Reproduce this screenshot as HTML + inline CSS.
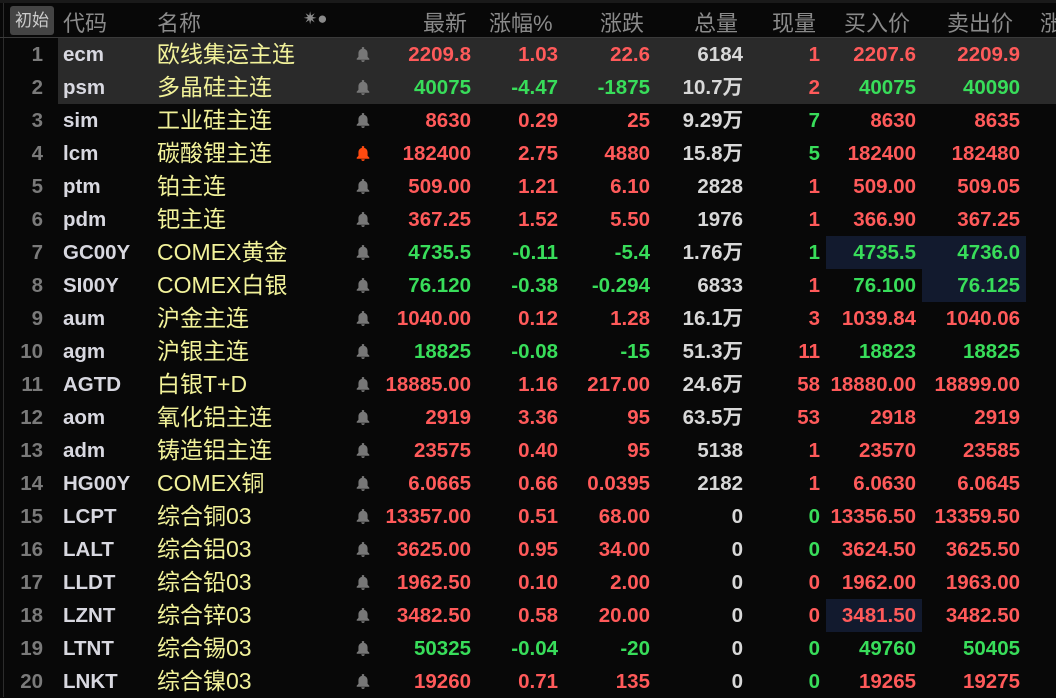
<!DOCTYPE html>
<html><head><meta charset="utf-8"><style>
body{margin:0;width:1056px;height:697px;background:#080808;overflow:hidden;position:relative;font-family:"Liberation Sans","Noto Sans CJK SC",sans-serif}
.top{position:absolute;left:0;top:0;width:1056px;height:3px;background:#1a1a1a}
.vl{position:absolute;left:3px;top:3px;width:1px;height:694px;background:#2c2c2c}
.hd{position:absolute;top:0;left:0;width:1056px;height:37px;border-bottom:1px solid #3a3a3a;color:#8a8a8a;font-size:22px}
.hd span{position:absolute;top:6px;white-space:nowrap}
.btn{position:absolute;left:10px;top:6px;width:44px;height:29px;background:#444;border-radius:3px;color:#ccc;font-size:17px;line-height:29px;text-align:center}
.r{position:absolute;left:0;width:1056px;height:33px;font-size:20.5px;font-weight:bold;line-height:33px}
.r.sel::before{content:"";position:absolute;left:58px;top:0;right:0;bottom:0;background:#2a2a2a}
.r span{position:absolute;top:0;white-space:nowrap}
.n{left:0;width:43px;text-align:right;color:#7a7a7a}
.c{left:63px;color:#d8d8e0}
.m{left:157px;color:#f2f29a;font-weight:normal;font-size:23px}
.b{position:absolute;left:355px;top:8px;width:16px;height:16px}
.v1{left:371px;width:100px;text-align:right}
.v2{left:478px;width:80px;text-align:right}
.v3{left:560px;width:90px;text-align:right}
.v4{left:653px;width:90px;text-align:right;color:#d8d8d8}
.v5{left:750px;width:70px;text-align:right}
.v6{left:822px;width:94px;text-align:right}
.v7{left:922px;width:98px;text-align:right}
.R{color:#ff5a5a}.G{color:#38dd5a}
.hl{position:absolute;background:#121a2e}
</style></head><body>
<div class="top"></div><div class="vl"></div>
<div class="hd">
<div class="btn">初始</div>
<span style="left:63px">代码</span><span style="left:157px">名称</span>
<span style="left:303px;font-size:17px;top:9px">✷●</span>
<span style="left:423px">最新</span><span style="left:489px">涨幅%</span><span style="left:600px">涨跌</span>
<span style="left:694px">总量</span><span style="left:772px">现量</span><span style="left:844px">买入价</span><span style="left:947px">卖出价</span><span style="left:1040px">涨</span>
</div>
<div class="hl" style="left:826px;top:236px;width:200px;height:33px"></div>
<div class="hl" style="left:922px;top:269px;width:104px;height:33px"></div>
<div class="hl" style="left:826px;top:599px;width:96px;height:33px"></div>
<svg width="0" height="0" style="position:absolute"><defs><symbol id="bell" viewBox="0 0 14 14"><path d="M6 1h2v1.5c2 .5 3 2 3 4v3l1.5 1.5v1H1.5v-1L3 9.5v-3c0-2 1-3.5 3-4z M5.5 12.5h3a1.5 1.5 0 0 1-3 0z"/></symbol></defs></svg>

<div class="r sel" style="top:38px"><span class="n">1</span><span class="c">ecm</span><span class="m">欧线集运主连</span><svg class="b" width="16" height="16" fill="#777"><use href="#bell"/></svg><span class="v1 R">2209.8</span><span class="v2 R">1.03</span><span class="v3 R">22.6</span><span class="v4">6184</span><span class="v5 R">1</span><span class="v6 R">2207.6</span><span class="v7 R">2209.9</span></div>
<div class="r sel" style="top:71px"><span class="n">2</span><span class="c">psm</span><span class="m">多晶硅主连</span><svg class="b" width="16" height="16" fill="#777"><use href="#bell"/></svg><span class="v1 G">40075</span><span class="v2 G">-4.47</span><span class="v3 G">-1875</span><span class="v4">10.7万</span><span class="v5 R">2</span><span class="v6 G">40075</span><span class="v7 G">40090</span></div>
<div class="r" style="top:104px"><span class="n">3</span><span class="c">sim</span><span class="m">工业硅主连</span><svg class="b" width="16" height="16" fill="#777"><use href="#bell"/></svg><span class="v1 R">8630</span><span class="v2 R">0.29</span><span class="v3 R">25</span><span class="v4">9.29万</span><span class="v5 G">7</span><span class="v6 R">8630</span><span class="v7 R">8635</span></div>
<div class="r" style="top:137px"><span class="n">4</span><span class="c">lcm</span><span class="m">碳酸锂主连</span><svg class="b" width="16" height="16" fill="#ff4a10"><use href="#bell"/></svg><span class="v1 R">182400</span><span class="v2 R">2.75</span><span class="v3 R">4880</span><span class="v4">15.8万</span><span class="v5 G">5</span><span class="v6 R">182400</span><span class="v7 R">182480</span></div>
<div class="r" style="top:170px"><span class="n">5</span><span class="c">ptm</span><span class="m">铂主连</span><svg class="b" width="16" height="16" fill="#777"><use href="#bell"/></svg><span class="v1 R">509.00</span><span class="v2 R">1.21</span><span class="v3 R">6.10</span><span class="v4">2828</span><span class="v5 R">1</span><span class="v6 R">509.00</span><span class="v7 R">509.05</span></div>
<div class="r" style="top:203px"><span class="n">6</span><span class="c">pdm</span><span class="m">钯主连</span><svg class="b" width="16" height="16" fill="#777"><use href="#bell"/></svg><span class="v1 R">367.25</span><span class="v2 R">1.52</span><span class="v3 R">5.50</span><span class="v4">1976</span><span class="v5 R">1</span><span class="v6 R">366.90</span><span class="v7 R">367.25</span></div>
<div class="r" style="top:236px"><span class="n">7</span><span class="c">GC00Y</span><span class="m">COMEX黄金</span><svg class="b" width="16" height="16" fill="#777"><use href="#bell"/></svg><span class="v1 G">4735.5</span><span class="v2 G">-0.11</span><span class="v3 G">-5.4</span><span class="v4">1.76万</span><span class="v5 G">1</span><span class="v6 G">4735.5</span><span class="v7 G">4736.0</span></div>
<div class="r" style="top:269px"><span class="n">8</span><span class="c">SI00Y</span><span class="m">COMEX白银</span><svg class="b" width="16" height="16" fill="#777"><use href="#bell"/></svg><span class="v1 G">76.120</span><span class="v2 G">-0.38</span><span class="v3 G">-0.294</span><span class="v4">6833</span><span class="v5 R">1</span><span class="v6 G">76.100</span><span class="v7 G">76.125</span></div>
<div class="r" style="top:302px"><span class="n">9</span><span class="c">aum</span><span class="m">沪金主连</span><svg class="b" width="16" height="16" fill="#777"><use href="#bell"/></svg><span class="v1 R">1040.00</span><span class="v2 R">0.12</span><span class="v3 R">1.28</span><span class="v4">16.1万</span><span class="v5 R">3</span><span class="v6 R">1039.84</span><span class="v7 R">1040.06</span></div>
<div class="r" style="top:335px"><span class="n">10</span><span class="c">agm</span><span class="m">沪银主连</span><svg class="b" width="16" height="16" fill="#777"><use href="#bell"/></svg><span class="v1 G">18825</span><span class="v2 G">-0.08</span><span class="v3 G">-15</span><span class="v4">51.3万</span><span class="v5 R">11</span><span class="v6 G">18823</span><span class="v7 G">18825</span></div>
<div class="r" style="top:368px"><span class="n">11</span><span class="c">AGTD</span><span class="m">白银T+D</span><svg class="b" width="16" height="16" fill="#777"><use href="#bell"/></svg><span class="v1 R">18885.00</span><span class="v2 R">1.16</span><span class="v3 R">217.00</span><span class="v4">24.6万</span><span class="v5 R">58</span><span class="v6 R">18880.00</span><span class="v7 R">18899.00</span></div>
<div class="r" style="top:401px"><span class="n">12</span><span class="c">aom</span><span class="m">氧化铝主连</span><svg class="b" width="16" height="16" fill="#777"><use href="#bell"/></svg><span class="v1 R">2919</span><span class="v2 R">3.36</span><span class="v3 R">95</span><span class="v4">63.5万</span><span class="v5 R">53</span><span class="v6 R">2918</span><span class="v7 R">2919</span></div>
<div class="r" style="top:434px"><span class="n">13</span><span class="c">adm</span><span class="m">铸造铝主连</span><svg class="b" width="16" height="16" fill="#777"><use href="#bell"/></svg><span class="v1 R">23575</span><span class="v2 R">0.40</span><span class="v3 R">95</span><span class="v4">5138</span><span class="v5 R">1</span><span class="v6 R">23570</span><span class="v7 R">23585</span></div>
<div class="r" style="top:467px"><span class="n">14</span><span class="c">HG00Y</span><span class="m">COMEX铜</span><svg class="b" width="16" height="16" fill="#777"><use href="#bell"/></svg><span class="v1 R">6.0665</span><span class="v2 R">0.66</span><span class="v3 R">0.0395</span><span class="v4">2182</span><span class="v5 R">1</span><span class="v6 R">6.0630</span><span class="v7 R">6.0645</span></div>
<div class="r" style="top:500px"><span class="n">15</span><span class="c">LCPT</span><span class="m">综合铜03</span><svg class="b" width="16" height="16" fill="#777"><use href="#bell"/></svg><span class="v1 R">13357.00</span><span class="v2 R">0.51</span><span class="v3 R">68.00</span><span class="v4">0</span><span class="v5 G">0</span><span class="v6 R">13356.50</span><span class="v7 R">13359.50</span></div>
<div class="r" style="top:533px"><span class="n">16</span><span class="c">LALT</span><span class="m">综合铝03</span><svg class="b" width="16" height="16" fill="#777"><use href="#bell"/></svg><span class="v1 R">3625.00</span><span class="v2 R">0.95</span><span class="v3 R">34.00</span><span class="v4">0</span><span class="v5 G">0</span><span class="v6 R">3624.50</span><span class="v7 R">3625.50</span></div>
<div class="r" style="top:566px"><span class="n">17</span><span class="c">LLDT</span><span class="m">综合铅03</span><svg class="b" width="16" height="16" fill="#777"><use href="#bell"/></svg><span class="v1 R">1962.50</span><span class="v2 R">0.10</span><span class="v3 R">2.00</span><span class="v4">0</span><span class="v5 R">0</span><span class="v6 R">1962.00</span><span class="v7 R">1963.00</span></div>
<div class="r" style="top:599px"><span class="n">18</span><span class="c">LZNT</span><span class="m">综合锌03</span><svg class="b" width="16" height="16" fill="#777"><use href="#bell"/></svg><span class="v1 R">3482.50</span><span class="v2 R">0.58</span><span class="v3 R">20.00</span><span class="v4">0</span><span class="v5 R">0</span><span class="v6 R">3481.50</span><span class="v7 R">3482.50</span></div>
<div class="r" style="top:632px"><span class="n">19</span><span class="c">LTNT</span><span class="m">综合锡03</span><svg class="b" width="16" height="16" fill="#777"><use href="#bell"/></svg><span class="v1 G">50325</span><span class="v2 G">-0.04</span><span class="v3 G">-20</span><span class="v4">0</span><span class="v5 G">0</span><span class="v6 G">49760</span><span class="v7 G">50405</span></div>
<div class="r" style="top:665px"><span class="n">20</span><span class="c">LNKT</span><span class="m">综合镍03</span><svg class="b" width="16" height="16" fill="#777"><use href="#bell"/></svg><span class="v1 R">19260</span><span class="v2 R">0.71</span><span class="v3 R">135</span><span class="v4">0</span><span class="v5 G">0</span><span class="v6 R">19265</span><span class="v7 R">19275</span></div>
</body></html>
